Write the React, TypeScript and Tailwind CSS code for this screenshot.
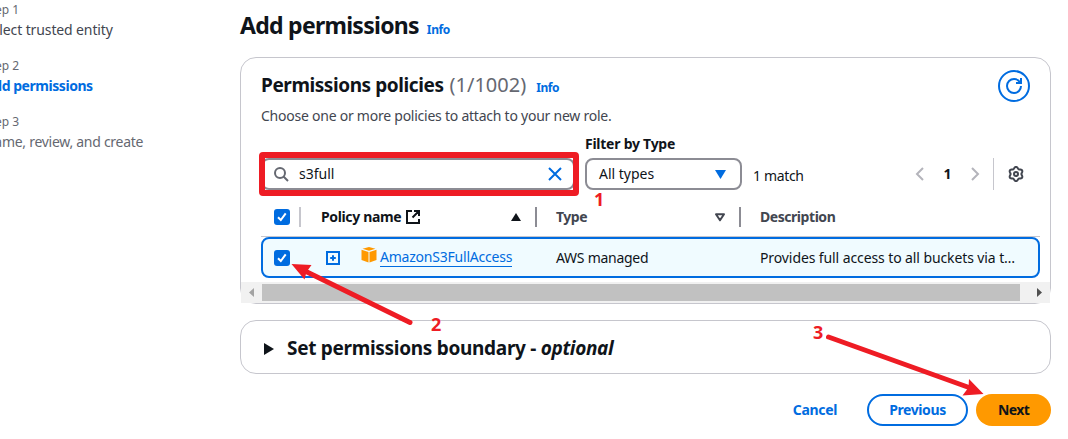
import type { ReactNode } from "react";

type StepProps = { label: string; children: ReactNode };

function Step({ label, children }: StepProps) {
  return (
    <li className="h-14 whitespace-nowrap">
      <div className="text-[12px] leading-[18px] text-[#656871]">{label}</div>
      <div className="mt-px text-[14px] leading-5">{children}</div>
    </li>
  );
}

function Checkbox() {
  return (
    <span className="flex size-4 items-center justify-center rounded-[3px] bg-[#006ce0]">
      <svg viewBox="0 0 16 16" className="size-4" fill="none" stroke="#fff" strokeWidth="2">
        <path d="M4 8.2 6.8 11 11.7 4.3" />
      </svg>
    </span>
  );
}

function InfoLink({ className }: { className: string }) {
  return <a className={`text-[12px] font-bold tracking-[-0.4px] text-[#006ce0] ${className}`}>Info</a>;
}

function RefreshIcon() {
  return (
    <svg viewBox="0 0 16 16" className="size-4" fill="none" stroke="#006ce0" strokeWidth="2">
      <path d="M15 8c0 3.87-3.13 7-7 7s-7-3.13-7-7 3.13-7 7-7c2.79 0 5.2 1.63 6.33 4" />
      <path d="M10 5h5V0" />
    </svg>
  );
}

// Outline of a gear with six rounded lobes, one of them pointing straight up.
const gearOutline = Array.from({ length: 72 }, (_, i) => {
  const angle = (i * Math.PI) / 36;
  const radius = 6.25 - 0.85 * Math.cos(6 * angle);
  return `${(8 + radius * Math.cos(angle)).toFixed(2)},${(8 + radius * Math.sin(angle)).toFixed(2)}`;
}).join(" ");

function GearIcon() {
  return (
    <svg viewBox="0 0 16 16" className="size-4" fill="none" stroke="#424650" strokeWidth="2" strokeLinejoin="round">
      <polygon points={gearOutline} />
      <circle cx="8" cy="8" r="2" />
    </svg>
  );
}

function Annotations() {
  return (
    <svg
      viewBox="0 0 1068 439"
      className="pointer-events-none absolute inset-0 h-[439px] w-[1068px] font-['Noto_Sans',sans-serif] text-[18px] font-bold"
      fill="#ee1c24"
    >
      <rect x="262" y="155" width="314" height="38" rx="1" fill="none" stroke="#ee1c24" strokeWidth="6" />
      <path d="M410 322.5 306 271.5" stroke="#ee1c24" strokeWidth="5" strokeLinecap="round" />
      <path d="M291.5 264 311.5 265 306.5 272 304.5 279.5z" />
      <path d="M828.5 337 969 387.5" stroke="#ee1c24" strokeWidth="5" strokeLinecap="round" />
      <path d="M983.5 394 969 379 968.5 387.5 962.5 395.5z" />
      <text x="594" y="206">1</text>
      <text x="431" y="331">2</text>
      <text x="813" y="339">3</text>
    </svg>
  );
}

export default function App() {
  return (
    <div className="relative flex h-[439px] w-[1068px] overflow-hidden bg-white font-['Noto_Sans',sans-serif] text-[14px] leading-5 text-[#0f141a]">
      <nav className="w-60 shrink-0 pt-px">
        <ol className="-ml-4">
          <Step label="Step 1">
            <span className="tracking-[-0.12px] text-[#424650]">Select trusted entity</span>
          </Step>
          <Step label="Step 2">
            <span className="font-bold tracking-[-0.45px] text-[#006ce0]">Add permissions</span>
          </Step>
          <Step label="Step 3">
            <span className="tracking-[-0.28px] text-[#656871]">Name, review, and create</span>
          </Step>
        </ol>
      </nav>

      <main className="w-[811px] pt-2.5">
        <header className="flex h-[30px] items-baseline gap-2 leading-[30px]">
          <h1 className="text-[23px] font-bold tracking-[-0.72px]">Add permissions</h1>
          <InfoLink className="" />
        </header>

        <section className="mt-[17px] h-[247px] rounded-2xl border border-[#c6c6cd]">
          <div className="flex items-start justify-between pt-3 pr-5 pl-5">
            <div className="pt-[3px]">
              <div className="flex h-6 items-baseline leading-6">
                <h2 className="text-[19px] font-bold tracking-[-0.42px]">Permissions policies</h2>
                <span className="ml-1.5 text-[20px] text-[#656871]">(1/1002)</span>
                <InfoLink className="ml-2.5" />
              </div>
              <p className="mt-[9px] tracking-[-0.24px] text-[#424650]">
                Choose one or more policies to attach to your new role.
              </p>
            </div>
            <button className="flex size-8 items-center justify-center rounded-full border-2 border-[#006ce0]">
              <RefreshIcon />
            </button>
          </div>

          <div className="mt-2 flex h-14 items-end pr-[26px] pl-5">
            <div className="flex h-8 w-[314px] items-center rounded-lg border-2 border-[#8c8c94] pr-2.5 pl-2.5">
              <svg viewBox="0 0 16 16" className="size-4" fill="none" stroke="#656871" strokeWidth="2">
                <circle cx="7" cy="7" r="5" />
                <path d="m10.5 10.5 4.5 4.5" />
              </svg>
              <span className="ml-2.5 flex-1">s3full</span>
              <svg viewBox="0 0 16 16" className="size-4" fill="none" stroke="#006ce0" strokeWidth="2">
                <path d="m2 2 12 12M14 2 2 14" />
              </svg>
            </div>
            <div className="ml-2.5 w-[157px]">
              <div className="mb-1 font-bold tracking-[-0.25px]">Filter by Type</div>
              <div className="flex h-8 items-center justify-between rounded-lg border-2 border-[#8c8c94] pr-[14px] pl-3">
                <span>All types</span>
                <svg viewBox="0 0 11 9" className="h-[9px] w-[11px]" fill="#006ce0">
                  <path d="M0 0h11L5.5 9z" />
                </svg>
              </div>
            </div>
            <span className="mb-1 ml-[11px] tracking-[-0.35px]">1 match</span>
            <div className="ml-auto flex h-8 items-center">
              <svg viewBox="0 0 9 14" className="h-3.5 w-[9px]" fill="none" stroke="#b4b4bb" strokeWidth="2">
                <path d="M8 1 2 7l6 6" />
              </svg>
              <span className="w-[47px] text-center font-bold">1</span>
              <svg viewBox="0 0 9 14" className="h-3.5 w-[9px]" fill="none" stroke="#b4b4bb" strokeWidth="2">
                <path d="m1 1 6 6-6 6" />
              </svg>
              <div className="mr-[14px] ml-[13px] h-8 w-px bg-[#c6c6cd]" />
              <GearIcon />
            </div>
          </div>

          <div className="mr-2.5 ml-5">
            <div className="grid h-[47px] grid-cols-[40px_236px_204px_1fr] items-center border-b border-[#c6c6cd] pt-[17px] pb-[9px] font-bold">
              <div className="flex h-5 items-center justify-between border-r-2 border-[#c6c6cd] pl-[13px]">
                <Checkbox />
              </div>
              <div className="flex h-5 items-center border-r-2 border-[#8c8c94] pr-[14px] pl-5">
                <span className="tracking-[-0.36px]">Policy name</span>
                <svg viewBox="0 0 16 16" className="ml-1 size-4" fill="none" stroke="#0f141a" strokeWidth="2">
                  <path d="M7 2H2v12h12V10M9 2h5v5M14 2 7.5 8.5" />
                </svg>
                <svg viewBox="0 0 10 8" className="ml-auto h-2 w-2.5" fill="#0f141a">
                  <path d="M5 0l5 8H0z" />
                </svg>
              </div>
              <div className="flex h-5 items-center justify-between border-r-2 border-[#8c8c94] pr-[13px] pl-[19px] text-[#424650]">
                <span className="tracking-[-0.5px]">Type</span>
                <svg viewBox="0 0 12 9" className="h-[9px] w-3" fill="none" stroke="#424650" strokeWidth="2" strokeLinejoin="round">
                  <path d="M2 1.3h8L6 7.3z" />
                </svg>
              </div>
              <div className="pl-[19px] tracking-[-0.45px] text-[#424650]">Description</div>
            </div>

            <div className="grid h-[41px] grid-cols-[38px_235px_204px_1fr] items-center rounded-lg border-2 border-[#006ce0] bg-[#f0fbff]">
              <div className="pl-[11px]">
                <Checkbox />
              </div>
              <div className="flex items-center pl-6">
                <svg viewBox="0 0 16 16" className="size-4" fill="none" stroke="#006ce0" strokeWidth="2">
                  <path d="M2 2h12v12H2zM8 5.2v5.6M5.2 8h5.6" />
                </svg>
                <svg viewBox="0 0 16 16" className="mb-1.5 ml-5 size-4" fill="#ff9900">
                  <path d="M8 0l6.5 1.8L8 3.8 1.5 1.8zM.5 2.8l7 2.1v10.6l-7-2.6zM15.5 2.8l-7 2.1v10.6l7-2.6z" />
                </svg>
                <a className="ml-[3px] border-b border-[#006ce0] leading-[18px] tracking-[-0.22px] text-[#006ce0]">
                  AmazonS3FullAccess
                </a>
              </div>
              <div className="pl-5 tracking-[-0.27px]">AWS managed</div>
              <div className="pl-5 tracking-[-0.1px] whitespace-nowrap">Provides full access to all buckets via t…</div>
            </div>
          </div>

          <div className="mt-1 flex h-[21px] items-center justify-between bg-[#f1f1f1] pr-2 pl-2">
            <svg viewBox="0 0 5 9" className="h-[9px] w-[5px]" fill="#a3a3a3">
              <path d="M5 0v9L0 4.5z" />
            </svg>
            <div className="mr-[17px] ml-2 h-[17px] flex-1 bg-[#c1c1c1]" />
            <svg viewBox="0 0 5 9" className="h-[9px] w-[5px]" fill="#505050">
              <path d="M0 0v9l5-4.5z" />
            </svg>
          </div>
        </section>

        <section className="mt-4 flex h-[54px] items-center rounded-2xl border border-[#c6c6cd] pl-[23px]">
          <svg viewBox="0 0 10 12" className="mt-1 h-3 w-2.5" fill="#0f141a">
            <path d="M0 0v12l10-6z" />
          </svg>
          <h2 className="mt-0.5 ml-[13px] text-[19px] font-bold tracking-[-0.3px] whitespace-pre">
            Set permissions boundary - <em className="tracking-[-0.35px]">optional</em>
          </h2>
        </section>

        <footer className="mt-5 flex h-8 items-center justify-end gap-2 font-bold text-[#006ce0]">
          <button className="mr-[22px] tracking-[-0.33px]">Cancel</button>
          <button className="h-8 w-[101px] rounded-full border-2 border-[#006ce0] tracking-[-0.4px]">Previous</button>
          <button className="h-8 w-[75px] rounded-full bg-[#ff9900] tracking-[-0.6px] text-[#0f141a]">Next</button>
        </footer>
      </main>

      <Annotations />
    </div>
  );
}
